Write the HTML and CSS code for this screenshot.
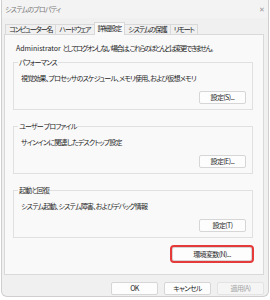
FILE: index.html
```html
<!DOCTYPE html>
<html lang="ja">
<head>
  <meta charset="UTF-8" />
  <meta name="viewport" content="width=device-width, initial-scale=1.0" />
  <title>システムのプロパティ</title>
  <link rel="stylesheet" href="styles.css">
</head>
<body>
  <div class="window">
    <div class="titlebar">
      <span class="title">システムのプロパティ</span>
      <span class="close">✕</span>
    </div>

    <div class="tabs">
      <span class="tab">コンピューター名</span>
      <span class="tab">ハードウェア</span>
      <span class="tab active">詳細設定</span>
      <span class="tab">システムの保護</span>
      <span class="tab">リモート</span>
    </div>

    <div class="panel">
      <p class="intro"><span class="latin">Administrator </span>としてログオンしない場合は、これらのほとんどは変更できません。</p>

      <fieldset class="group">
        <legend>パフォーマンス</legend>
        <p>視覚効果、プロセッサのスケジュール、メモリ使用、および仮想メモリ</p>
        <div class="row"><button class="btn">設定(S)...</button></div>
      </fieldset>

      <fieldset class="group">
        <legend>ユーザー プロファイル</legend>
        <p>サインインに関連したデスクトップ設定</p>
        <div class="row"><button class="btn">設定(E)...</button></div>
      </fieldset>

      <fieldset class="group">
        <legend>起動と回復</legend>
        <p>システム起動、システム障害、およびデバッグ情報</p>
        <div class="row"><button class="btn">設定(T)</button></div>
      </fieldset>

      <div class="row env-row"><button class="btn env">環境変数(N)...</button></div>
    </div>

    <div class="actions">
      <button class="btn wide">OK</button>
      <button class="btn wide">キャンセル</button>
      <button class="btn wide" disabled>適用(A)</button>
    </div>
  </div>
</body>
</html>
```

FILE: styles.css
```css
body {
  margin: 0;
  background: #ffffff;
  font-family: "Noto Sans CJK JP", "Noto Sans", sans-serif;
  font-size: 7px;
  font-feature-settings: "palt";
  letter-spacing: -0.8px;
  color: #1f1f1f;
}
.latin {
  letter-spacing: 0;
}
.window {
  width: 268px;
  height: 297px;
  box-sizing: border-box;
  background: #f0f0f0;
  border: 1px solid #cfcfcf;
  border-top: none;
  border-radius: 0 0 6px 6px;
  margin-left: 1px;
}
.titlebar {
  display: flex;
  justify-content: space-between;
  align-items: center;
  height: 18px;
  padding: 0 4px 0 3px;
  background: #f3f3f3;
}
.title {
  color: #7a7a7a;
  line-height: 10px;
}
.close {
  color: #9a9a9a;
  font-size: 7px;
}
.tabs {
  display: flex;
  align-items: flex-end;
  height: 16px;
  padding-left: 3px;
}
.tab {
  height: 9px;
  line-height: 9px;
  padding: 0 3px;
  letter-spacing: -1.1px;
  border: 1px solid #d9d9d9;
  border-bottom: none;
  margin-right: -1px;
  background: #f0f0f0;
}
.tab.active {
  height: 12px;
  line-height: 11px;
  background: #f9f9f9;
  position: relative;
  z-index: 1;
  margin-bottom: -1px;
}
.panel {
  margin: 0 4px 0 2px;
  height: 241px;
  box-sizing: border-box;
  background: #f9f9f9;
  border: 1px solid #d9d9d9;
  padding: 8px 10px 0 8px;
}
.intro {
  margin: 0 0 4px 3px;
  line-height: 10px;
  letter-spacing: -1.5px;
  white-space: nowrap;
}
.group {
  margin: 0 0 11px 0;
  padding: 0 6px 5px 6px;
  border: 1px solid #e0e0e0;
  min-width: 0;
}
.group:last-of-type {
  margin-bottom: 0;
}
.group legend {
  padding: 0 1px;
  margin-left: -2px;
  line-height: 10px;
}
.group p {
  margin: 6px 0 0 1px;
  line-height: 10px;
}
.row {
  display: flex;
  justify-content: flex-end;
}
.group .row {
  margin-top: 8px;
}
.btn {
  font: inherit;
  font-feature-settings: "palt";
  letter-spacing: -0.6px;
  color: #1f1f1f;
  width: 47px;
  height: 13px;
  padding: 0;
  line-height: 11px;
  background: #fdfdfd;
  border: 1px solid #d6d6d6;
  border-radius: 2px;
}
.env-row {
  margin-top: 9px;
}
.env {
  width: 80px;
  height: 14px;
  outline: 2px solid #e5393a;
  outline-offset: 0;
  margin-right: 1px;
}
.actions {
  display: flex;
  justify-content: flex-end;
  gap: 6px;
  padding: 7px 4px 0 0;
}
.btn:disabled {
  color: #a3a3a3;
  background: #f5f5f5;
  border-color: #e3e3e3;
}
```
